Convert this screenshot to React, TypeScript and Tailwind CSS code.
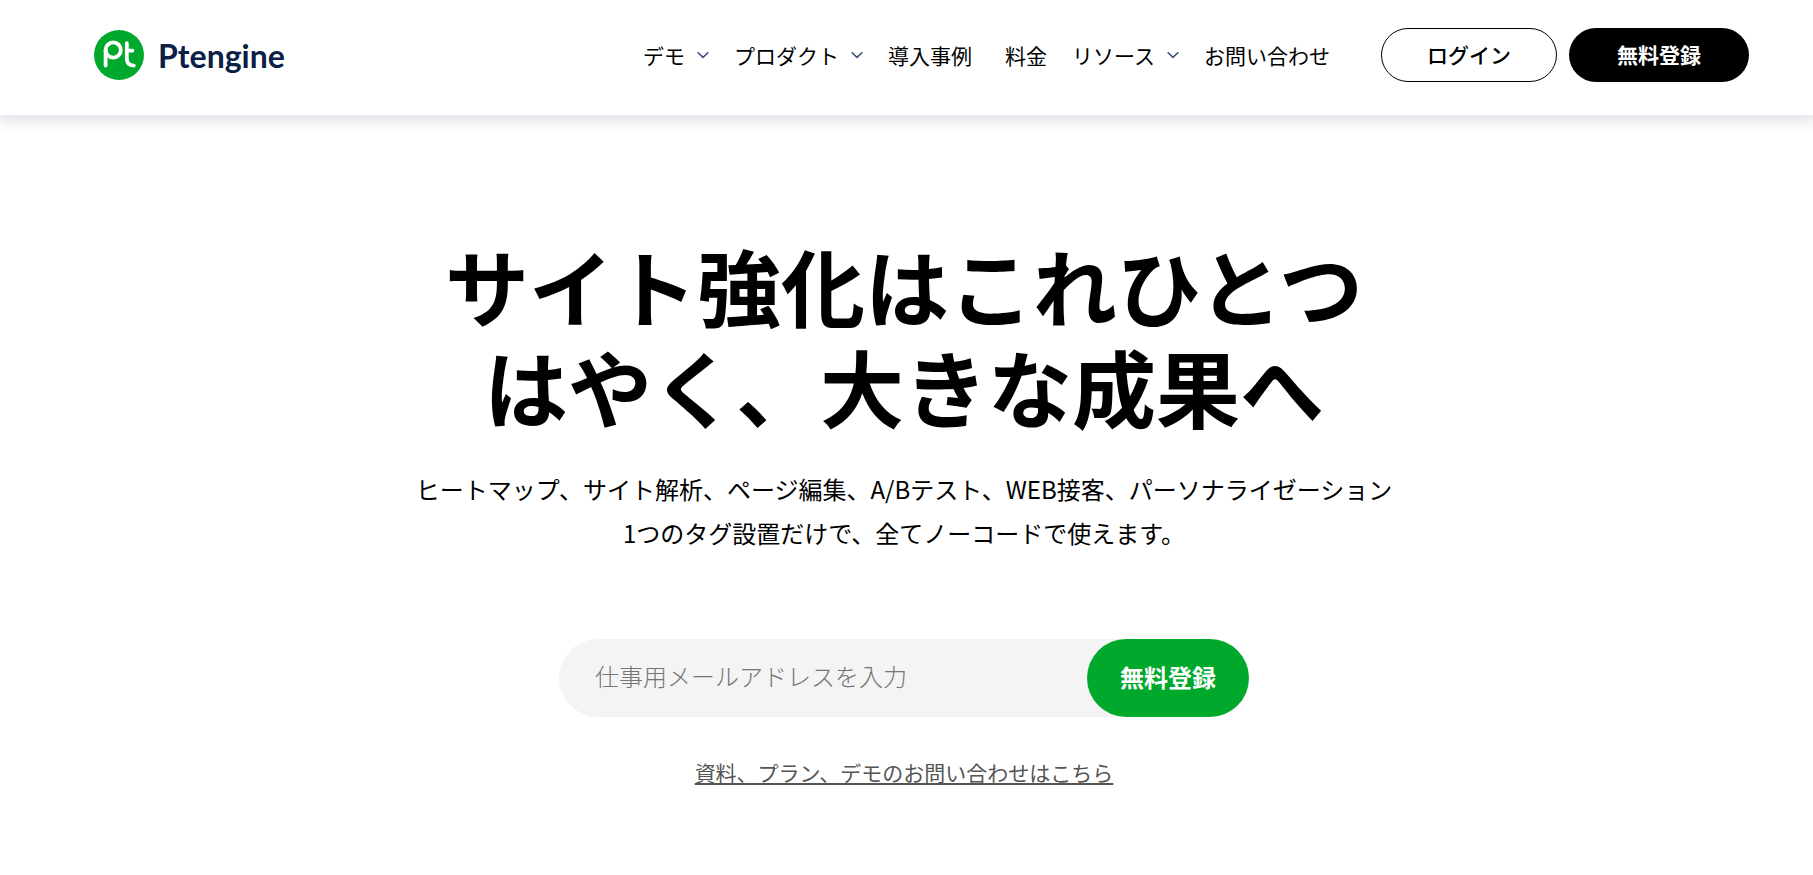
import React from "react";

type NavItem = { label: string; menu?: boolean; spaced?: boolean };

const navItems: NavItem[] = [
  { label: "デモ", menu: true },
  { label: "プロダクト", menu: true },
  { label: "導入事例" },
  { label: "料金", spaced: true },
  { label: "リソース", menu: true },
  { label: "お問い合わせ" },
];

function Chevron() {
  return (
    <svg viewBox="0 0 12 8" className="h-2 w-3" fill="none" stroke="#3d4f7c" strokeWidth="1.5" aria-hidden="true">
      <path d="M0.6 1.2 6 6.4 11.4 1.2" />
    </svg>
  );
}

function Logo() {
  return (
    <a href="#" aria-label="Ptengine" className="flex items-center gap-3.5">
      <svg viewBox="0 0 50 50" className="size-[50px]" fill="none" aria-hidden="true">
        <circle cx="25" cy="25" r="25" fill="#00a92c" />
        <g stroke="#fff" strokeWidth="3.8" strokeLinecap="round">
          <circle cx="19.2" cy="20" r="7.6" />
          <path d="M11.6 20V35.6" />
          <path d="M32.8 13.2V28.6Q32.8 35.6 39.8 35.6M32.8 20.6H38.4" />
        </g>
      </svg>
      <span className="pt-0.5 font-[Lato] text-[32px] leading-9 font-bold text-[#0b1f49]">Ptengine</span>
    </a>
  );
}

function Header() {
  return (
    <header className="flex h-[115px] items-center justify-between bg-white pr-16 pb-[5px] pl-[94px] shadow-[0_2px_14px_4px_rgba(10,25,60,0.13)]">
      <Logo />
      <div className="flex h-[54px] items-center">
        <nav className="mr-[51px] flex items-center gap-[25px]">
          {navItems.map((item) => (
            <a
              key={item.label}
              href="#"
              className={
                item.spaced
                  ? "ml-2 flex items-center gap-3 text-[21px] leading-8 whitespace-nowrap"
                  : "flex items-center gap-3 text-[21px] leading-8 whitespace-nowrap"
              }
            >
              {item.label}
              {item.menu && <Chevron />}
            </a>
          ))}
        </nav>
        <div className="flex gap-3">
          <button className="h-[54px] w-44 rounded-full border border-black bg-white text-[21px] font-medium">
            ログイン
          </button>
          <button className="h-[54px] w-[180px] rounded-full bg-black text-[21px] font-bold text-white">
            無料登録
          </button>
        </div>
      </div>
    </header>
  );
}

export default function App() {
  return (
    <div className="min-h-screen bg-white font-['Noto_Sans_CJK_JP',sans-serif] text-black">
      <Header />
      <main className="flex flex-col items-center pt-[119px] pr-[5px] pb-20 text-center">
        <h1 className="text-[84px] leading-[101px] font-bold">
          サイト強化はこれひとつ
          <br />
          はやく、大きな成果へ
        </h1>
        <p className="mt-[31px] text-2xl leading-[44px]">
          ヒートマップ、サイト解析、ページ編集、A/Bテスト、WEB接客、パーソナライゼーション
          <br />
          1つのタグ設置だけで、全てノーコードで使えます。
        </p>
        <form
          className="mt-[84px] flex h-[78px] w-full max-w-[690px] rounded-full bg-[#f4f4f4]"
          onSubmit={(event) => event.preventDefault()}
        >
          <input
            type="email"
            aria-label="仕事用メールアドレス"
            placeholder="仕事用メールアドレスを入力"
            className="min-w-0 flex-1 rounded-full bg-transparent pb-1 pl-9 text-2xl font-light outline-none placeholder:text-[#757575]"
          />
          <button className="w-[162px] rounded-full bg-[#00a92c] pb-0.5 text-2xl font-bold text-white">無料登録</button>
        </form>
        <a
          href="#"
          className="mt-[39px] text-[21px] leading-8 text-[#555555] underline decoration-2 underline-offset-2"
        >
          資料、プラン、デモのお問い合わせはこちら
        </a>
      </main>
    </div>
  );
}
